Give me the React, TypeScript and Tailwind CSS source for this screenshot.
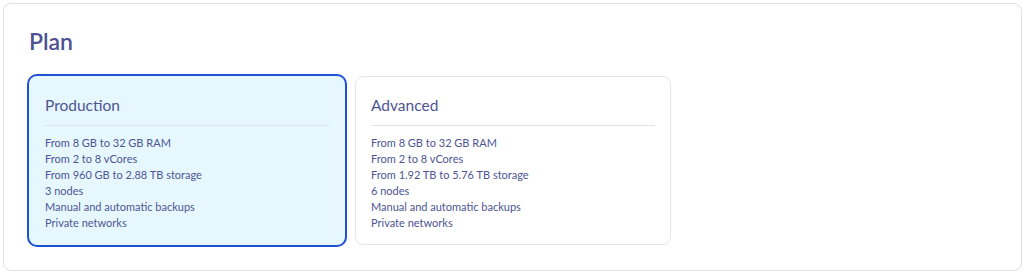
import React from 'react';

type Plan = {
  name: string;
  features: string[];
  selected?: boolean;
};

const plans: Plan[] = [
  {
    name: 'Production',
    selected: true,
    features: [
      'From 8 GB to 32 GB RAM',
      'From 2 to 8 vCores',
      'From 960 GB to 2.88 TB storage',
      '3 nodes',
      'Manual and automatic backups',
      'Private networks',
    ],
  },
  {
    name: 'Advanced',
    features: [
      'From 8 GB to 32 GB RAM',
      'From 2 to 8 vCores',
      'From 1.92 TB to 5.76 TB storage',
      '6 nodes',
      'Manual and automatic backups',
      'Private networks',
    ],
  },
];

const PlanCard: React.FC<{ plan: Plan }> = ({ plan }) => {
  return (
    <div
      className={
        plan.selected
          ? 'w-[316px] rounded-lg border border-transparent bg-[#e6f8fe] px-[15px] pt-[16px] pb-[13px] ring-2 ring-[#1f4fd2]'
          : 'w-[316px] rounded-lg border border-[#e3e5ea] bg-white px-[15px] pt-[16px] pb-[13px]'
      }
    >
      <h3 className="pb-2 text-[15.5px] leading-6 text-[#4d5594] border-b border-[#dfe3e8]">{plan.name}</h3>
      <ul className="mt-[9px] text-[11px] leading-4 text-[#4d5594]">
        {plan.features.map((f) => (
          <li key={f}>{f}</li>
        ))}
      </ul>
    </div>
  );
};

export default function App() {
  return (
    <div className="bg-white min-h-[275px] pt-[3px] font-['Lato',sans-serif]">
      <div className="mx-[3px] rounded-lg border border-[#e0e0e0] bg-white px-[25px] pt-[21px] pb-[25px]">
        <h2 className="text-[23px] leading-8 font-semibold text-[#4c5293]">Plan</h2>
        <div className="mt-[19px] flex gap-[10px]">
          {plans.map((p) => (
            <PlanCard key={p.name} plan={p} />
          ))}
        </div>
      </div>
    </div>
  );
}
